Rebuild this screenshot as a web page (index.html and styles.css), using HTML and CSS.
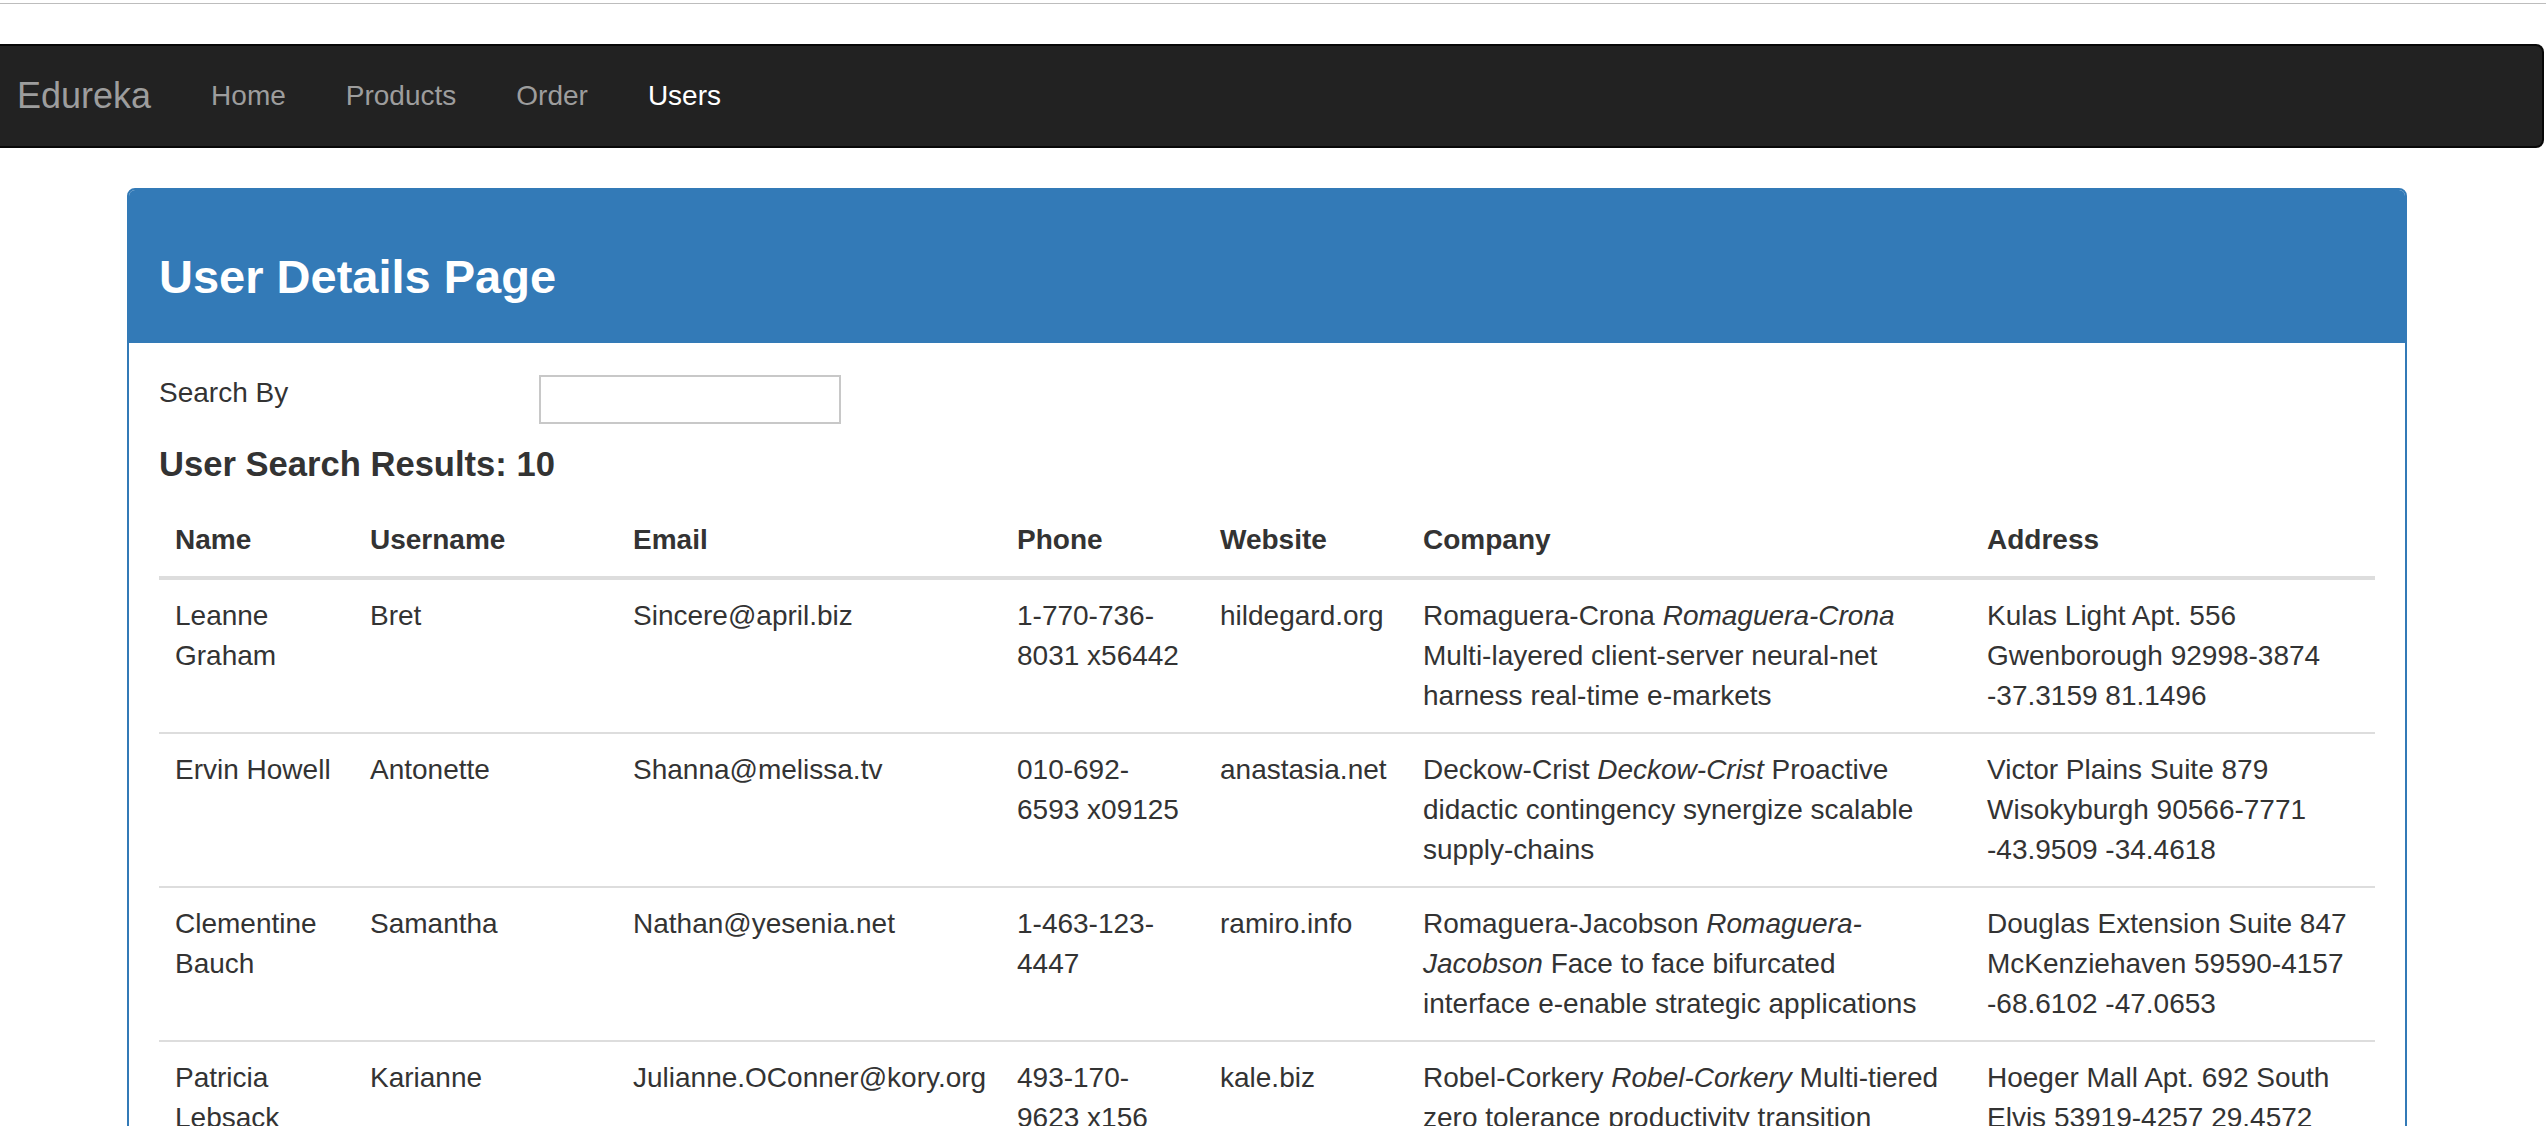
FILE: index.html
```html
<!DOCTYPE html>
<html lang="en">
<head>
<meta charset="utf-8">
<title>User Details</title>
<link rel="stylesheet" href="styles.css">
</head>
<body>
<div class="topline"></div>
<nav class="navbar">
  <a class="brand" href="#">Edureka</a>
  <ul class="nav">
    <li><a href="#">Home</a></li>
    <li><a href="#">Products</a></li>
    <li><a href="#">Order</a></li>
    <li><a class="active" href="#">Users</a></li>
  </ul>
</nav>
<div class="container">
  <div class="panel">
    <div class="panel-heading">
      <h3 class="panel-title">User Details Page</h3>
    </div>
    <div class="panel-body">
      <div class="search-row">
        <label class="search-label" for="search">Search By</label>
        <input class="search-input" id="search" type="text">
      </div>
      <h4 class="results">User Search Results: 10</h4>
      <table class="users">
        <colgroup>
          <col class="c-name"><col class="c-user"><col class="c-email"><col class="c-phone"><col class="c-web"><col class="c-company"><col class="c-address">
        </colgroup>
        <thead>
          <tr><th>Name</th><th>Username</th><th>Email</th><th>Phone</th><th>Website</th><th>Company</th><th>Address</th></tr>
        </thead>
        <tbody>
          <tr><td>Leanne Graham</td><td>Bret</td><td>Sincere@april.biz</td><td>1-770-736-8031 x56442</td><td>hildegard.org</td><td class="company">Romaguera-Crona <em>Romaguera-Crona</em> Multi-layered client-server neural-net harness real-time e-markets</td><td>Kulas Light Apt. 556 Gwenborough 92998-3874 -37.3159 81.1496</td></tr>
          <tr><td>Ervin Howell</td><td>Antonette</td><td>Shanna@melissa.tv</td><td>010-692-6593 x09125</td><td>anastasia.net</td><td class="company">Deckow-Crist <em>Deckow-Crist</em> Proactive didactic contingency synergize scalable supply-chains</td><td>Victor Plains Suite 879 Wisokyburgh 90566-7771 -43.9509 -34.4618</td></tr>
          <tr><td>Clementine Bauch</td><td>Samantha</td><td>Nathan@yesenia.net</td><td>1-463-123-4447</td><td>ramiro.info</td><td class="company">Romaguera-Jacobson <em>Romaguera-Jacobson</em> Face to face bifurcated interface e-enable strategic applications</td><td>Douglas Extension Suite 847 McKenziehaven 59590-4157 -68.6102 -47.0653</td></tr>
          <tr><td>Patricia Lebsack</td><td>Karianne</td><td>Julianne.OConner@kory.org</td><td>493-170-9623 x156</td><td>kale.biz</td><td class="company">Robel-Corkery <em>Robel-Corkery</em> Multi-tiered zero tolerance productivity transition cutting-edge web services</td><td>Hoeger Mall Apt. 692 South Elvis 53919-4257 29.4572 -164.2990</td></tr>
          <tr><td>Chelsey Dietrich</td><td>Kamren</td><td>Lucio_Hettinger@annie.ca</td><td>(254)954-1289</td><td>demarco.info</td><td class="company">Keebler LLC <em>Keebler LLC</em> User-centric fault-tolerant solution revolutionize end-to-end systems</td><td>Skiles Walks Suite 351 Roscoeview 33263 -31.8129 62.5342</td></tr>
          <tr><td>Mrs. Dennis Schulist</td><td>Leopoldo_Corkery</td><td>Karley_Dach@jasper.info</td><td>1-477-935-8478 x6430</td><td>ola.org</td><td class="company">Considine-Lockman <em>Considine-Lockman</em> Synchronised bottom-line interface e-enable innovative applications</td><td>Norberto Crossing Apt. 950 South Christy 23505-1337 -71.4197 71.7478</td></tr>
          <tr><td>Kurtis Weissnat</td><td>Elwyn.Skiles</td><td>Telly.Hoeger@billy.biz</td><td>210.067.6132</td><td>elvis.io</td><td class="company">Johns Group <em>Johns Group</em> Configurable multimedia task-force generate enterprise e-tailers</td><td>Rex Trail Suite 280 Howemouth 58804-1099 24.8918 21.8984</td></tr>
          <tr><td>Nicholas Runolfsdottir V</td><td>Maxime_Nienow</td><td>Sherwood@rosamond.me</td><td>586.493.6943 x140</td><td>jacynthe.com</td><td class="company">Abernathy Group <em>Abernathy Group</em> Implemented secondary concept e-enable extensible e-tailers</td><td>Ellsworth Summit Suite 729 Aliyaview 45169 -14.3990 -120.7677</td></tr>
          <tr><td>Glenna Reichert</td><td>Delphine</td><td>Chaim_McDermott@dana.io</td><td>(775)976-6794 x41206</td><td>conrad.com</td><td class="company">Yost and Sons <em>Yost and Sons</em> Switchable contextually-based project aggregate real-time technologies</td><td>Dayna Park Suite 449 Bartholomebury 76495-3109 24.6463 -168.8889</td></tr>
          <tr><td>Clementina DuBuque</td><td>Moriah.Stanton</td><td>Rey.Padberg@karina.biz</td><td>024-648-3804</td><td>ambrose.net</td><td class="company">Hoeger LLC <em>Hoeger LLC</em> Centralized empowering task-force target end-to-end models</td><td>Kattie Turnpike Suite 198 Lebsackbury 31428-2261 -38.2386 57.2232</td></tr>
        </tbody>
      </table>
    </div>
  </div>
</div>
</body>
</html>
```

FILE: styles.css
```css
html {
  scrollbar-width: none;
}
::-webkit-scrollbar {
  display: none;
}
* {
  box-sizing: border-box;
}
body {
  margin: 0;
  background: #fff;
  color: #333;
  font-family: "Liberation Sans", Arial, Helvetica, sans-serif;
  font-size: 28px;
  line-height: 40px;
}
.topline {
  height: 1px;
  margin-top: 3px;
  background: #bdbdbd;
}
.navbar {
  display: flex;
  align-items: center;
  height: 104px;
  margin: 40px 2px 0 0;
  background: #222;
  border: 2px solid #080808;
  border-left: none;
  border-radius: 0 8px 8px 0;
}
.brand {
  padding: 0 30px 0 17px;
  font-size: 36px;
  line-height: 40px;
  color: #9d9d9d;
  text-decoration: none;
}
.nav {
  display: flex;
  margin: 0;
  padding: 0;
  list-style: none;
}
.nav a {
  display: block;
  padding: 0 30px;
  color: #9d9d9d;
  text-decoration: none;
  font-size: 28px;
  line-height: 40px;
}
.nav a.active {
  color: #fff;
}
.container {
  width: 2280px;
  margin: 40px 0 0 127px;
}
.panel {
  background: #fff;
  border: 2px solid #337ab7;
  border-radius: 8px;
}
.panel-heading {
  background: #337ab7;
  color: #fff;
  padding: 20px 30px;
  border-radius: 6px 6px 0 0;
}
.panel-title {
  margin: 40px 0 20px;
  font-size: 47px;
  line-height: 53px;
  font-weight: bold;
}
.panel-body {
  padding: 30px;
}
.search-row {
  display: flex;
  align-items: flex-start;
}
.search-label {
  width: 380px;
  font-weight: normal;
}
.search-input {
  width: 302px;
  height: 49px;
  margin-top: 2px;
  border: 2px solid #c8c8c8;
  background: #fff;
  padding: 2px 4px;
  font: inherit;
}
.results {
  margin: 20px 0;
  font-size: 34.6px;
  line-height: 40px;
  font-weight: bold;
}
.users {
  width: 100%;
  border-collapse: collapse;
  table-layout: fixed;
}
.c-name { width: 195px; }
.c-user { width: 263px; }
.c-email { width: 384px; }
.c-phone { width: 203px; }
.c-web { width: 203px; }
.c-company { width: 564px; }
.c-address { width: 404px; }
.users th {
  text-align: left;
  font-weight: bold;
  padding: 16px;
  vertical-align: bottom;
  border-bottom: 4px solid #ddd;
}
.users td {
  padding: 16px;
  vertical-align: top;
  border-top: 2px solid #ddd;
}
.users td.company {
  padding-right: 26px;
}
```
